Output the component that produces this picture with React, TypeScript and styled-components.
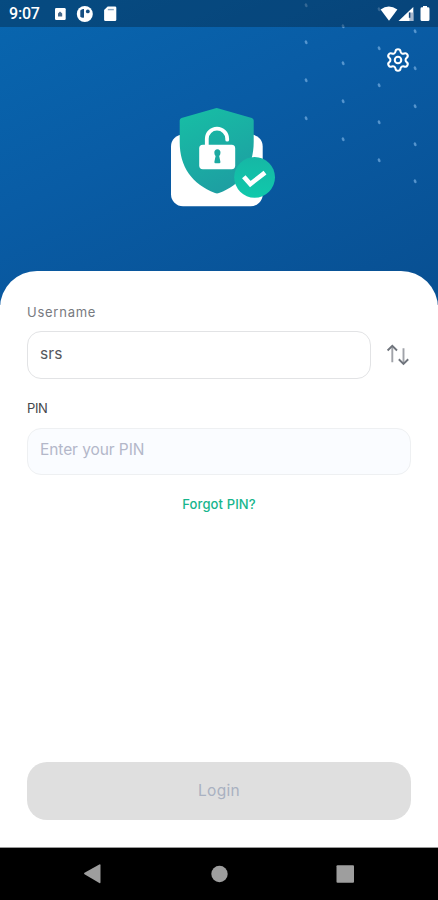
import React from "react";
import styled, { createGlobalStyle } from "styled-components";
import { Settings } from "lucide-react";

const GlobalStyle = createGlobalStyle`
  *, *::before, *::after { box-sizing: border-box; }
  body { margin: 0; background: #fff; font-family: Inter, "Open Sans", sans-serif; }
`;

const Screen = styled.div`
  width: 438px;
  height: 900px;
  display: flex;
  flex-direction: column;
  overflow: hidden;
  background: #fff;
`;

const Hero = styled.header`
  position: relative;
  flex: none;
  height: 305px;
  margin-bottom: -34px;
  display: flex;
  flex-direction: column;
  background: linear-gradient(155deg, #0866af 0%, #095ca5 42%, #085093 95%);
`;

const DotField = styled.svg`
  position: absolute;
  top: 0;
  right: 0;
`;

const StatusBar = styled.div`
  position: relative;
  height: 27px;
  padding: 0 8px 0 9px;
  display: flex;
  align-items: center;
  background: rgba(5, 35, 60, 0.4);
  color: #fff;
`;

const Clock = styled.span`
  width: 44px;
  font: 500 16px/28px Roboto, sans-serif;
  letter-spacing: -0.2px;
`;

const StatusIcons = styled.svg`
  display: block;
`;

const RightIcons = styled(StatusIcons)`
  margin-left: auto;
`;

const Toolbar = styled.div`
  position: relative;
  display: flex;
  justify-content: flex-end;
  padding: 19.5px 27px 0 0;
  height: 76px;
`;

const IconButton = styled.button`
  display: flex;
  flex: none;
  width: 26px;
  height: 26px;
  padding: 0;
  border: 0;
  background: none;
  color: #fff;
`;

const Emblem = styled.svg`
  position: relative;
  display: block;
  margin-left: 168px;
`;

const Card = styled.main`
  position: relative;
  flex: 1;
  display: flex;
  flex-direction: column;
  padding: 32px 27px 27px;
  background: #fff;
  border-radius: 37px 37px 0 0;
`;

const Label = styled.label<{ $dark?: boolean }>`
  height: 20px;
  font-size: 13px;
  line-height: ${(p) => (p.$dark ? 20 : 19)}px;
  letter-spacing: ${(p) => (p.$dark ? "-0.35px" : "0.75px")};
  color: ${(p) => (p.$dark ? "#45474c" : "#777a80")};
`;

const FieldRow = styled.div`
  display: flex;
  align-items: center;
  gap: 15px;
  margin: 8px 0 19px;
`;

const Field = styled.input<{ $muted?: boolean }>`
  flex: 1;
  min-width: 0;
  height: ${(p) => (p.$muted ? 47 : 48)}px;
  padding: 0 12px ${(p) => (p.$muted ? 4 : 3)}px;
  font: 400 15.5px/20px Inter, sans-serif;
  letter-spacing: ${(p) => (p.$muted ? "-0.08px" : "0.15px")};
  color: #55575c;
  background: ${(p) => (p.$muted ? "#fafcff" : "#fff")};
  border: 1px solid ${(p) => (p.$muted ? "#eef0f2" : "#e2e3e5")};
  border-radius: 14px;
  outline: 0;
  &::placeholder { color: #b3b7c9; opacity: 1; }
`;

const PinRow = styled(FieldRow)`
  margin: 10px 0 19px;
`;

const SwapButton = styled(IconButton)`
  width: 25px;
  height: 24px;
`;

const ForgotLink = styled.a`
  align-self: center;
  height: 20px;
  font-size: 13px;
  line-height: 20px;
  font-weight: 500;
  letter-spacing: 0.13px;
  color: #16b58c;
`;

const LoginButton = styled.button`
  height: 58px;
  margin-top: auto;
  padding: 0 0 1px;
  border: 0;
  border-radius: 20px;
  background: #dfdfdf;
  color: #a9b1c1;
  font: 400 15.5px/20px Inter, sans-serif;
  letter-spacing: 0.3px;
`;

const NavBar = styled.nav`
  flex: none;
  height: 53px;
  padding-bottom: 1px;
  display: flex;
  align-items: center;
  justify-content: center;
  background: #000;
  border-top: 1px solid #999;
`;

const dots: [number, number][] = [
  [16, 5], [16, 42], [16, 80], [16, 118],
  [53, 26], [53, 63], [53, 101], [53, 139],
  [89, 9], [89, 48], [89, 85], [89, 122], [89, 160],
  [125, 31], [125, 68], [125, 106], [125, 144], [125, 181],
];

function Dots() {
  return (
    <DotField width="148" height="200" viewBox="0 0 148 200" fill="#6fa8dc" fillOpacity="0.75">
      {dots.map(([x, y]) => (
        <ellipse key={`${x}-${y}`} cx={x} cy={y + 0.3} rx="1.3" ry="2" transform={`rotate(-28 ${x} ${y})`} />
      ))}
    </DotField>
  );
}

function NotificationIcons() {
  return (
    <StatusIcons width="66" height="27" viewBox="53 0 66 27">
      <rect x="55" y="8" width="10.7" height="12" rx="1.2" fill="#fff" />
      <path d="M58 16.5v-3l2-2 2.2 2v3z" fill="#46698b" />
      <circle cx="84.8" cy="14" r="8" fill="#fff" />
      <path d="M80.3 10.5q1.5-2 3.7-1.5v8.5q-2 .7-3.7-.8z" fill="#164f83" />
      <circle cx="87.8" cy="11.4" r="1.9" fill="#164f83" />
      <path d="M107.7 6.5H115q1.3 0 1.3 1.3v11.9q0 1.3-1.3 1.3h-9.6q-1.3 0-1.3-1.3V10z" fill="#fff" />
      <path d="M107.8 9.6h6" stroke="#8da9c2" strokeWidth="1.4" />
    </StatusIcons>
  );
}

function SignalIcons() {
  return (
    <RightIcons width="50" height="27" viewBox="380 0 50 27">
      <path d="M380.6 9.6q8-6.2 16.8 0L389 20.7z" fill="#fff" />
      <path d="M413.3 7v14H398.5z" fill="#fff" />
      <path d="M409.4 12.5h3.9V21h-3.9z" fill="#a9b9ce" />
      <path d="M409.6 12.5v5.3" stroke="#124477" strokeWidth="1.5" />
      <path d="M423 6h4v1.3h1q1.5 0 1.5 1.4v10.8q0 1.5-1.5 1.5h-6q-1.5 0-1.5-1.5V8.7q0-1.4 1.5-1.4h1z" fill="#fff" />
    </RightIcons>
  );
}

function SecurityEmblem() {
  return (
    <Emblem width="110" height="106" viewBox="168 103 110 106">
      <defs>
        <linearGradient id="shield" x1="0" y1="0" x2="0.4" y2="1">
          <stop offset="0" stopColor="#17bfa5" />
          <stop offset="1" stopColor="#1da0a2" />
        </linearGradient>
        <linearGradient id="badge" x1="0" y1="0" x2="0" y2="1">
          <stop offset="0" stopColor="#16b7a5" />
          <stop offset="1" stopColor="#10c9ab" />
        </linearGradient>
      </defs>
      <rect x="171" y="134.5" width="91.7" height="71.7" rx="12" fill="#fff" />
      <path
        d="M214.8 108.6Q216.7 107.5 218.6 108.6L251.8 118Q253.7 118.7 253.7 120.5V142C253.7 167 241 185 219 193Q217 193.8 215 193C192 184 179.7 167 179.7 142V120.5Q179.7 118.7 181.5 118Z"
        fill="url(#shield)"
      />
      <path d="M206.8 146v-7.2a10.2 10.2 0 0 1 20.4 0v.9" fill="none" stroke="#fff" strokeWidth="3.8" strokeLinecap="round" />
      <rect x="199.2" y="144.8" width="36" height="24.4" rx="3.6" fill="#fff" />
      <path d="M214.4 153.2a3.1 3.1 0 1 1 6 0q0 1.7-1.2 2.8l1.2 5.8q.2 1.5-1.2 1.5h-3.6q-1.4 0-1.2-1.5l1.2-5.8q-1.2-1.1-1.2-2.8z" fill="#1caaa1" />
      <circle cx="254.6" cy="177.3" r="20.4" fill="url(#badge)" />
      <path d="m243.8 176.8 6.5 7.2 14.7-11.3" fill="none" stroke="#fff" strokeWidth="4.7" />
    </Emblem>
  );
}

export default function App() {
  return (
    <>
      <GlobalStyle />
      <Screen>
        <Hero>
          <Dots />
          <StatusBar>
            <Clock>9:07</Clock>
            <NotificationIcons />
            <SignalIcons />
          </StatusBar>
          <Toolbar>
            <IconButton aria-label="Settings">
              <Settings size={26} strokeWidth={1.9} />
            </IconButton>
          </Toolbar>
          <SecurityEmblem />
        </Hero>
        <Card>
          <Label htmlFor="username">Username</Label>
          <FieldRow>
            <Field id="username" defaultValue="srs" />
            <SwapButton aria-label="Switch user">
              <svg width="25" height="24" viewBox="0 0.7 25 24" fill="none" strokeWidth="1.9">
                <path d="M6.3 20V4M17.5 6v15" stroke="#a0a3a9" />
                <path d="M1.6 8.2 6.3 3.6l4.7 4.6M12.8 17l4.7 4.6 4.7-4.6" stroke="#6f747c" />
              </svg>
            </SwapButton>
          </FieldRow>
          <Label htmlFor="pin" $dark>PIN</Label>
          <PinRow>
            <Field id="pin" placeholder="Enter your PIN" $muted />
          </PinRow>
          <ForgotLink>Forgot PIN?</ForgotLink>
          <LoginButton>Login</LoginButton>
        </Card>
        <NavBar>
          <svg width="438" height="40" viewBox="0 854 438 40" fill="#9e9e9e">
            <path d="M84.5 873.2q-1-.7 0-1.4l14.8-8.4q1.2-.6 1.2.8v17q0 1.4-1.2.8z" transform="translate(0 1)" />
            <circle cx="219.5" cy="874" r="8.2" />
            <rect x="336.5" y="865.3" width="17.5" height="17.5" rx="1" />
          </svg>
        </NavBar>
      </Screen>
    </>
  );
}
